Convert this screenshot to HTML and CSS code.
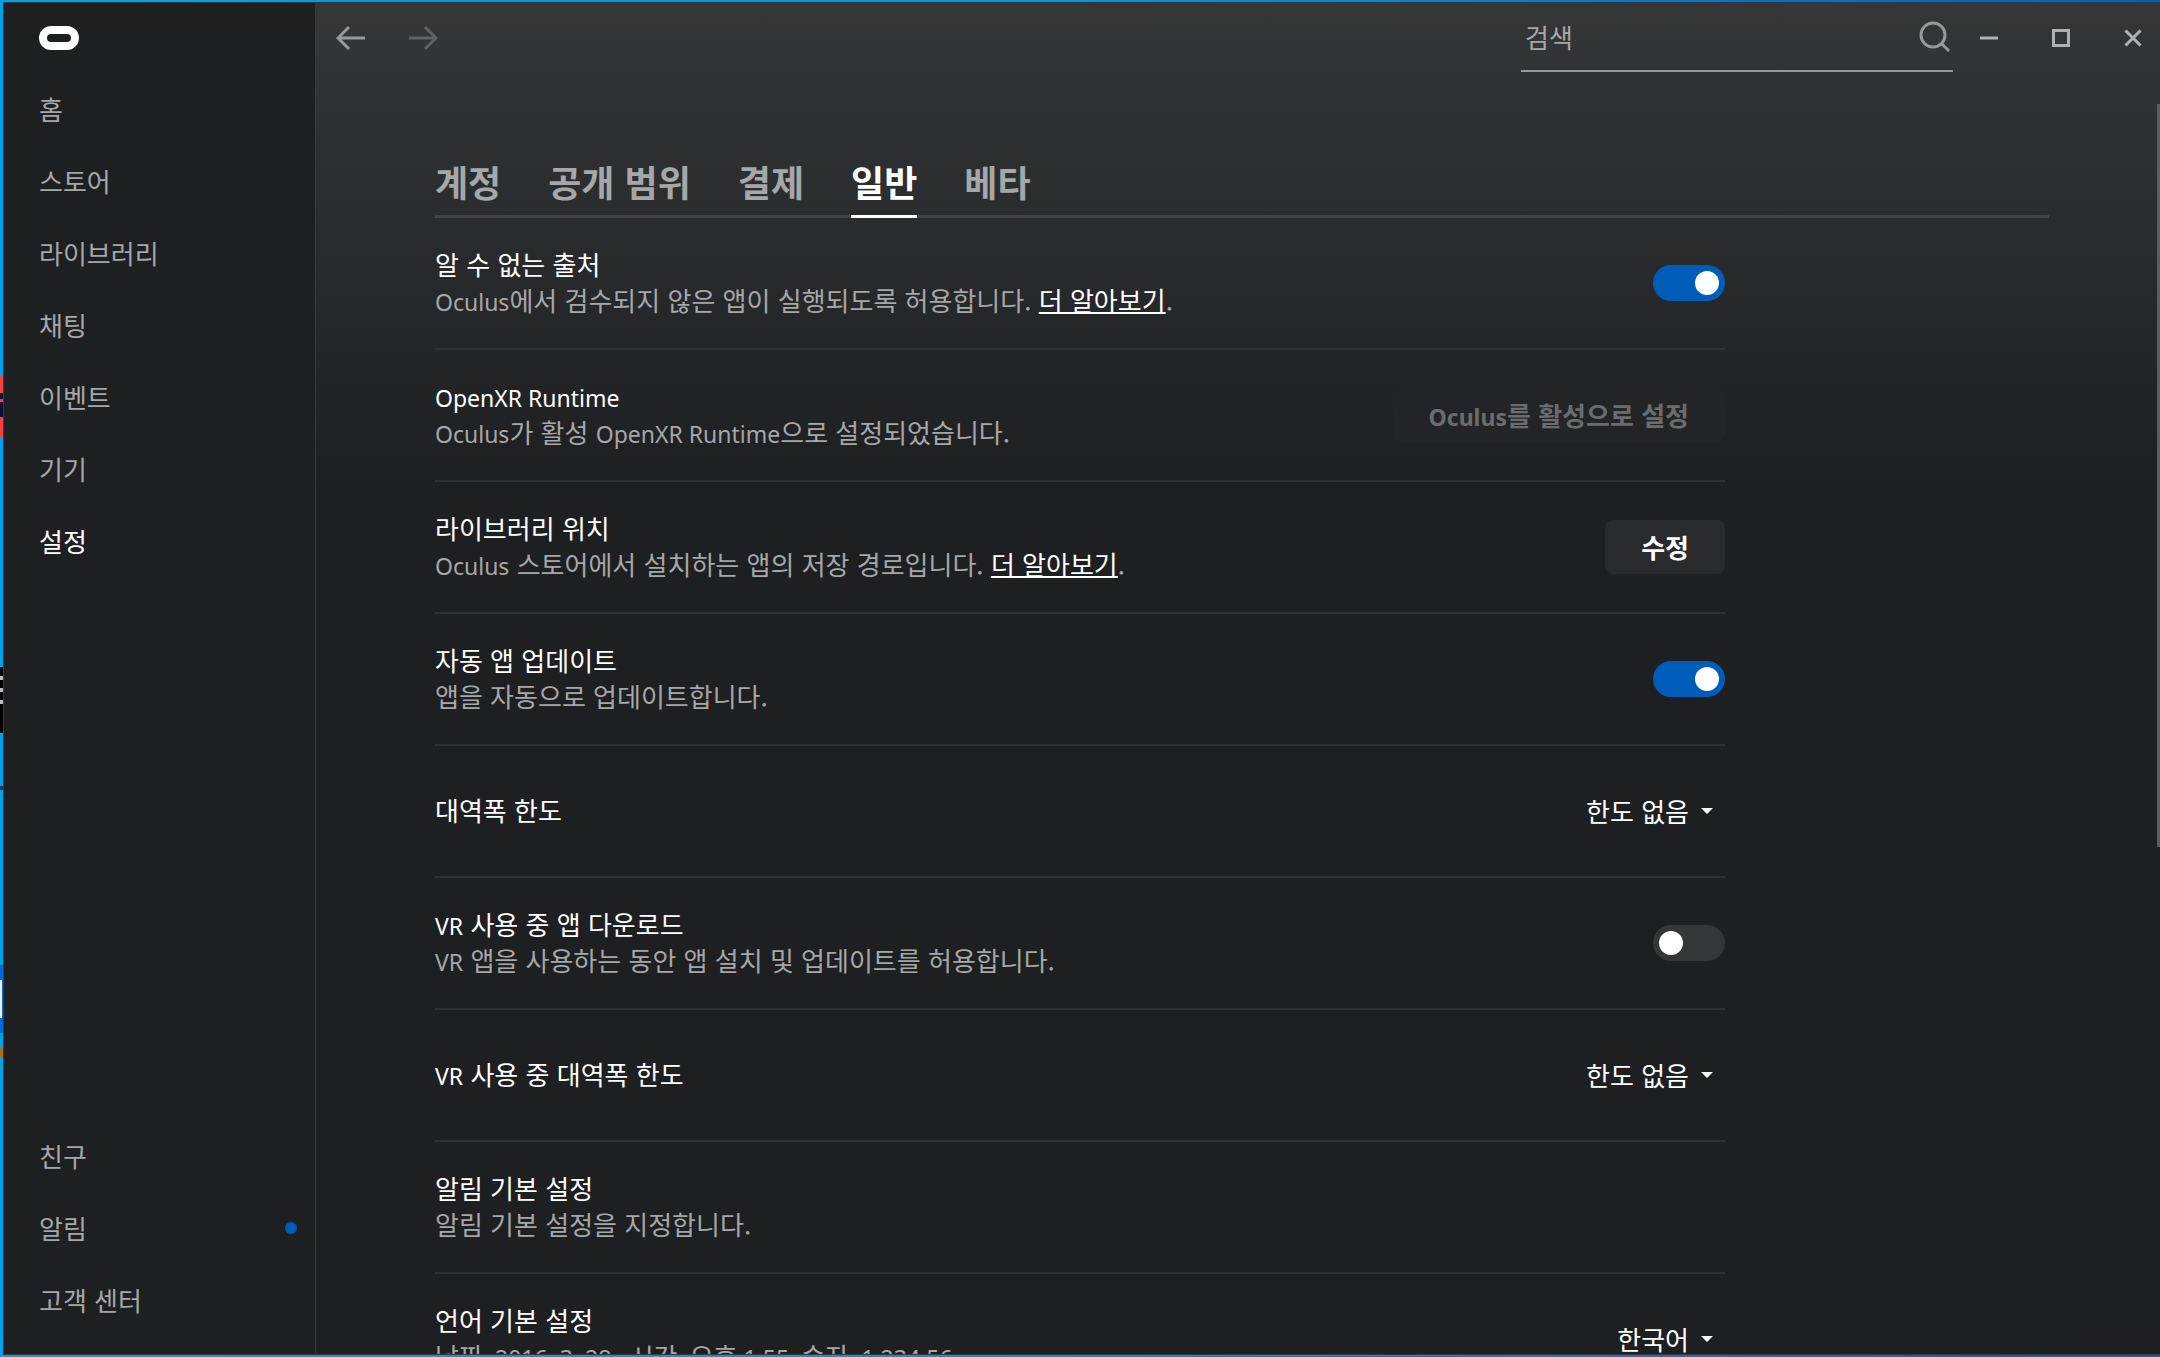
FILE: index.html
```html
<!DOCTYPE html>
<html lang="ko">

<head>
  <meta charset="UTF-8">
  <meta name="viewport" content="width=device-width, initial-scale=1.0">
  <title>Oculus</title>
  <link rel="stylesheet" href="styles.css">
</head>

<body>
  <div class="window">
    <aside class="sidebar">
      <a class="logo" href="#" aria-label="Oculus">
        <svg width="40" height="24" viewBox="0 0 40 24">
          <rect x="4" y="4" width="32" height="16" rx="8" fill="none" stroke="#fff" stroke-width="8" />
        </svg>
      </a>
      <nav class="menu">
        <a href="#">홈</a>
        <a href="#">스토어</a>
        <a href="#">라이브러리</a>
        <a href="#">채팅</a>
        <a href="#">이벤트</a>
        <a href="#">기기</a>
        <a href="#" class="active">설정</a>
      </nav>
      <nav class="menu menu-bottom">
        <a href="#">친구</a>
        <a href="#">알림<span class="dot"></span></a>
        <a href="#">고객 센터</a>
      </nav>
    </aside>

    <main class="main">
      <header class="topbar">
        <div class="history">
          <button type="button" aria-label="뒤로">
            <svg width="30" height="26" viewBox="0 0 30 26">
              <path d="M29 13H2M13 2L2 13l11 11" />
            </svg>
          </button>
          <button type="button" class="dim" aria-label="앞으로">
            <svg width="30" height="26" viewBox="0 0 30 26">
              <path d="M1 13h27M17 2l11 11-11 11" />
            </svg>
          </button>
        </div>
        <label class="search">
          <input type="text" placeholder="검색" aria-label="검색">
          <svg width="32" height="32" viewBox="0 0 32 32">
            <circle cx="14" cy="14" r="12" />
            <path d="M22 22l8 8" />
          </svg>
        </label>
        <div class="controls">
          <button type="button" aria-label="최소화">
            <svg width="18" height="18" viewBox="0 0 18 18">
              <path d="M0 9h18" />
            </svg>
          </button>
          <button type="button" aria-label="최대화">
            <svg width="18" height="18" viewBox="0 0 18 18">
              <path d="M1.500 1.500h15v15h-15z" />
            </svg>
          </button>
          <button type="button" aria-label="닫기">
            <svg width="18" height="18" viewBox="0 0 18 18">
              <path d="M1.500 1.500l15 15M16.500 1.500l-15 15" />
            </svg>
          </button>
        </div>
      </header>

      <div class="content">
        <nav class="tabs">
          <a href="#">계정</a>
          <a href="#">공개 범위</a>
          <a href="#">결제</a>
          <a href="#" class="active">일반</a>
          <a href="#">베타</a>
        </nav>

        <div class="settings">
          <div class="row">
            <div class="text">
              <label class="title" for="unknown">알 수 없는 출처</label>
              <p><span class="latin">Oculus</span>에서 검수되지 않은 앱이 실행되도록 허용합니다. <a href="#">더 알아보기</a>.</p>
            </div>
            <input class="toggle" type="checkbox" id="unknown" checked>
          </div>
          <div class="row">
            <div class="text">
              <h2 class="title"><span class="latin">OpenXR Runtime</span></h2>
              <p><span class="latin">Oculus</span>가 활성 <span class="latin">OpenXR Runtime</span>으로 설정되었습니다.</p>
            </div>
            <button class="btn" type="button" disabled><span class="latin">Oculus</span>를 활성으로 설정</button>
          </div>
          <div class="row">
            <div class="text">
              <h2 class="title">라이브러리 위치</h2>
              <p><span class="latin">Oculus</span> 스토어에서 설치하는 앱의 저장 경로입니다. <a href="#">더 알아보기</a>.</p>
            </div>
            <button class="btn" type="button">수정</button>
          </div>
          <div class="row">
            <div class="text">
              <label class="title" for="update">자동 앱 업데이트</label>
              <p>앱을 자동으로 업데이트합니다.</p>
            </div>
            <input class="toggle" type="checkbox" id="update" checked>
          </div>
          <div class="row">
            <div class="text">
              <label class="title" for="bandwidth">대역폭 한도</label>
            </div>
            <div class="select">
              <select id="bandwidth">
                <option>한도 없음</option>
              </select>
            </div>
          </div>
          <div class="row">
            <div class="text">
              <label class="title" for="download"><span class="latin">VR</span> 사용 중 앱 다운로드</label>
              <p><span class="latin">VR</span> 앱을 사용하는 동안 앱 설치 및 업데이트를 허용합니다.</p>
            </div>
            <input class="toggle" type="checkbox" id="download">
          </div>
          <div class="row">
            <div class="text">
              <label class="title" for="vr-bandwidth"><span class="latin">VR</span> 사용 중 대역폭 한도</label>
            </div>
            <div class="select">
              <select id="vr-bandwidth">
                <option>한도 없음</option>
              </select>
            </div>
          </div>
          <div class="row">
            <div class="text">
              <h2 class="title">알림 기본 설정</h2>
              <p>알림 기본 설정을 지정합니다.</p>
            </div>
          </div>
          <div class="row">
            <div class="text">
              <label class="title" for="language">언어 기본 설정</label>
              <p>날짜<span class="latin">: 2016. 3. 28., </span>시간<span class="latin">: </span>오후<span class="latin"> 1:55, </span>숫자<span class="latin">: 1,234.56</span></p>
            </div>
            <div class="select">
              <select id="language">
                <option>한국어</option>
              </select>
            </div>
          </div>
        </div>
      </div>
      <div class="scrollbar"></div>
    </main>
  </div>
</body>

</html>
```

FILE: styles.css
```css
* {
  margin: 0;
  padding: 0;
  box-sizing: border-box;
}

/* desktop wallpaper and icons peeking out around the window */
body {
  height: 100vh;
  padding: 2px 0 2px 3px;
  overflow: hidden;
  background:
    linear-gradient(#0d0d3a 6px, #f04040 6px 9px, #0d0d3a 9px) 0 393px / 3px 24px no-repeat,
    linear-gradient(#f04040, #f04040) 0 376px / 3px 62px no-repeat,
    repeating-linear-gradient(#bbb 0 4px, #000 4px 12px) 0 676px / 3px 30px no-repeat,
    linear-gradient(#000, #000) 0 667px / 3px 66px no-repeat,
    linear-gradient(#1a3c50, #1a3c50) 0 786px / 3px 4px no-repeat,
    linear-gradient(#eee, #eee) 0 980px / 2px 38px no-repeat,
    linear-gradient(#0068d0, #0068d0) 0 965px / 3px 68px no-repeat,
    linear-gradient(#b06a20, #b06a20) 0 1047px / 3px 11px no-repeat,
    linear-gradient(90deg, #00a0e8, #0095e0 50%, #0060c0);
  color: #fff;
  font-family: "Noto Sans CJK KR", sans-serif;
  font-size: 26px;
  line-height: 36px;
}

a {
  color: inherit;
  text-decoration: none;
}

button,
input,
select {
  border: 0;
  background: none;
  color: inherit;
  font: inherit;
}

svg {
  display: block;
  fill: none;
}

.latin {
  font-family: "Noto Sans", sans-serif;
  font-size: 23px;
  line-height: 1;
}

.window {
  display: flex;
  height: 100%;
  border: 1px solid #38393b;
  border-right: 0;
  background: #1e1f21;
}

.sidebar {
  display: flex;
  flex: 0 0 312px;
  flex-direction: column;
  padding-bottom: 18px;
  border-right: 1px solid #38393b;
}

.logo {
  display: flex;
  align-items: center;
  height: 70px;
  padding-left: 35px;
}

.menu a {
  display: flex;
  align-items: center;
  justify-content: space-between;
  height: 72px;
  padding: 0 18px 0 35px;
  color: #a6a7a8;
}

.menu a.active {
  color: #fff;
}

.menu-bottom {
  margin-top: auto;
}

.dot {
  width: 12px;
  height: 12px;
  border-radius: 50%;
  background: #005cb9;
}

.main {
  position: relative;
  flex: 1;
  min-width: 0;
  overflow: hidden;
  background: linear-gradient(#353638, #1e1f21 480px);
}

.topbar {
  display: flex;
  align-items: center;
  height: 69px;
  padding-left: 20px;
}

.history {
  display: flex;
  gap: 42px;
}

.history svg {
  stroke: #98999a;
  stroke-width: 3;
}

.history .dim svg {
  stroke: #606163;
}

.search {
  display: flex;
  align-items: center;
  width: 432px;
  height: 69px;
  margin-left: auto;
  padding: 0 2px 0 4px;
  border-bottom: 2px solid #98999a;
}

.search input {
  flex: 1;
  min-width: 0;
  outline: 0;
}

.search input::placeholder {
  color: #a6a7a8;
}

.search svg {
  stroke: #98999a;
  stroke-width: 3;
}

.controls {
  display: flex;
}

.controls button {
  display: flex;
  align-items: center;
  justify-content: center;
  width: 72px;
  height: 69px;
}

.controls button:last-child {
  width: 63px;
  padding-left: 9px;
}

.controls svg {
  stroke: #b0b1b2;
  stroke-width: 3;
}

.content {
  padding: 85px 111px 0 119px;
}

.tabs {
  display: flex;
  gap: 47px;
  border-bottom: 3px solid #424345;
  color: #a6a7a8;
  font-size: 36px;
  font-weight: 700;
  line-height: 48px;
}

.tabs a {
  margin-bottom: -3px;
  padding-bottom: 10px;
  border-bottom: 3px solid transparent;
}

.tabs a.active {
  border-color: #fff;
  color: #fff;
}

.settings {
  max-width: 1290px;
}

.row {
  display: flex;
  align-items: center;
  justify-content: space-between;
  height: 132px;
  border-bottom: 2px solid #303133;
}

.text {
  padding-bottom: 2px;
}

.title {
  display: block;
  font-size: 26px;
  font-weight: 400;
}

.text p {
  color: #a6a7a8;
}

.text p a {
  color: #fff;
  text-decoration: underline;
  text-decoration-thickness: 2px;
}

.toggle {
  width: 72px;
  height: 36px;
  padding: 6px;
  border-radius: 18px;
  background: #353638;
  appearance: none;
}

.toggle::before {
  display: block;
  width: 24px;
  height: 24px;
  border-radius: 50%;
  background: #fff;
  content: "";
}

.toggle:checked {
  background: #005cb9;
}

.toggle:checked::before {
  margin-left: auto;
}

.btn {
  height: 54px;
  padding: 0 36px;
  border-radius: 8px;
  background: #292a2c;
  font-weight: 700;
}

.btn:disabled {
  background: #232426;
  color: #6b6c6e;
}

.select {
  display: flex;
  align-items: center;
  gap: 12px;
  padding-right: 12px;
}

.select select {
  appearance: none;
  field-sizing: content;
}

.select::after {
  border: 6px solid transparent;
  border-top-color: #fff;
  border-bottom: 0;
  content: "";
}

.scrollbar {
  position: absolute;
  top: 101px;
  right: 0;
  width: 3px;
  height: 55%;
  background: #5c5d5f;
}
```
